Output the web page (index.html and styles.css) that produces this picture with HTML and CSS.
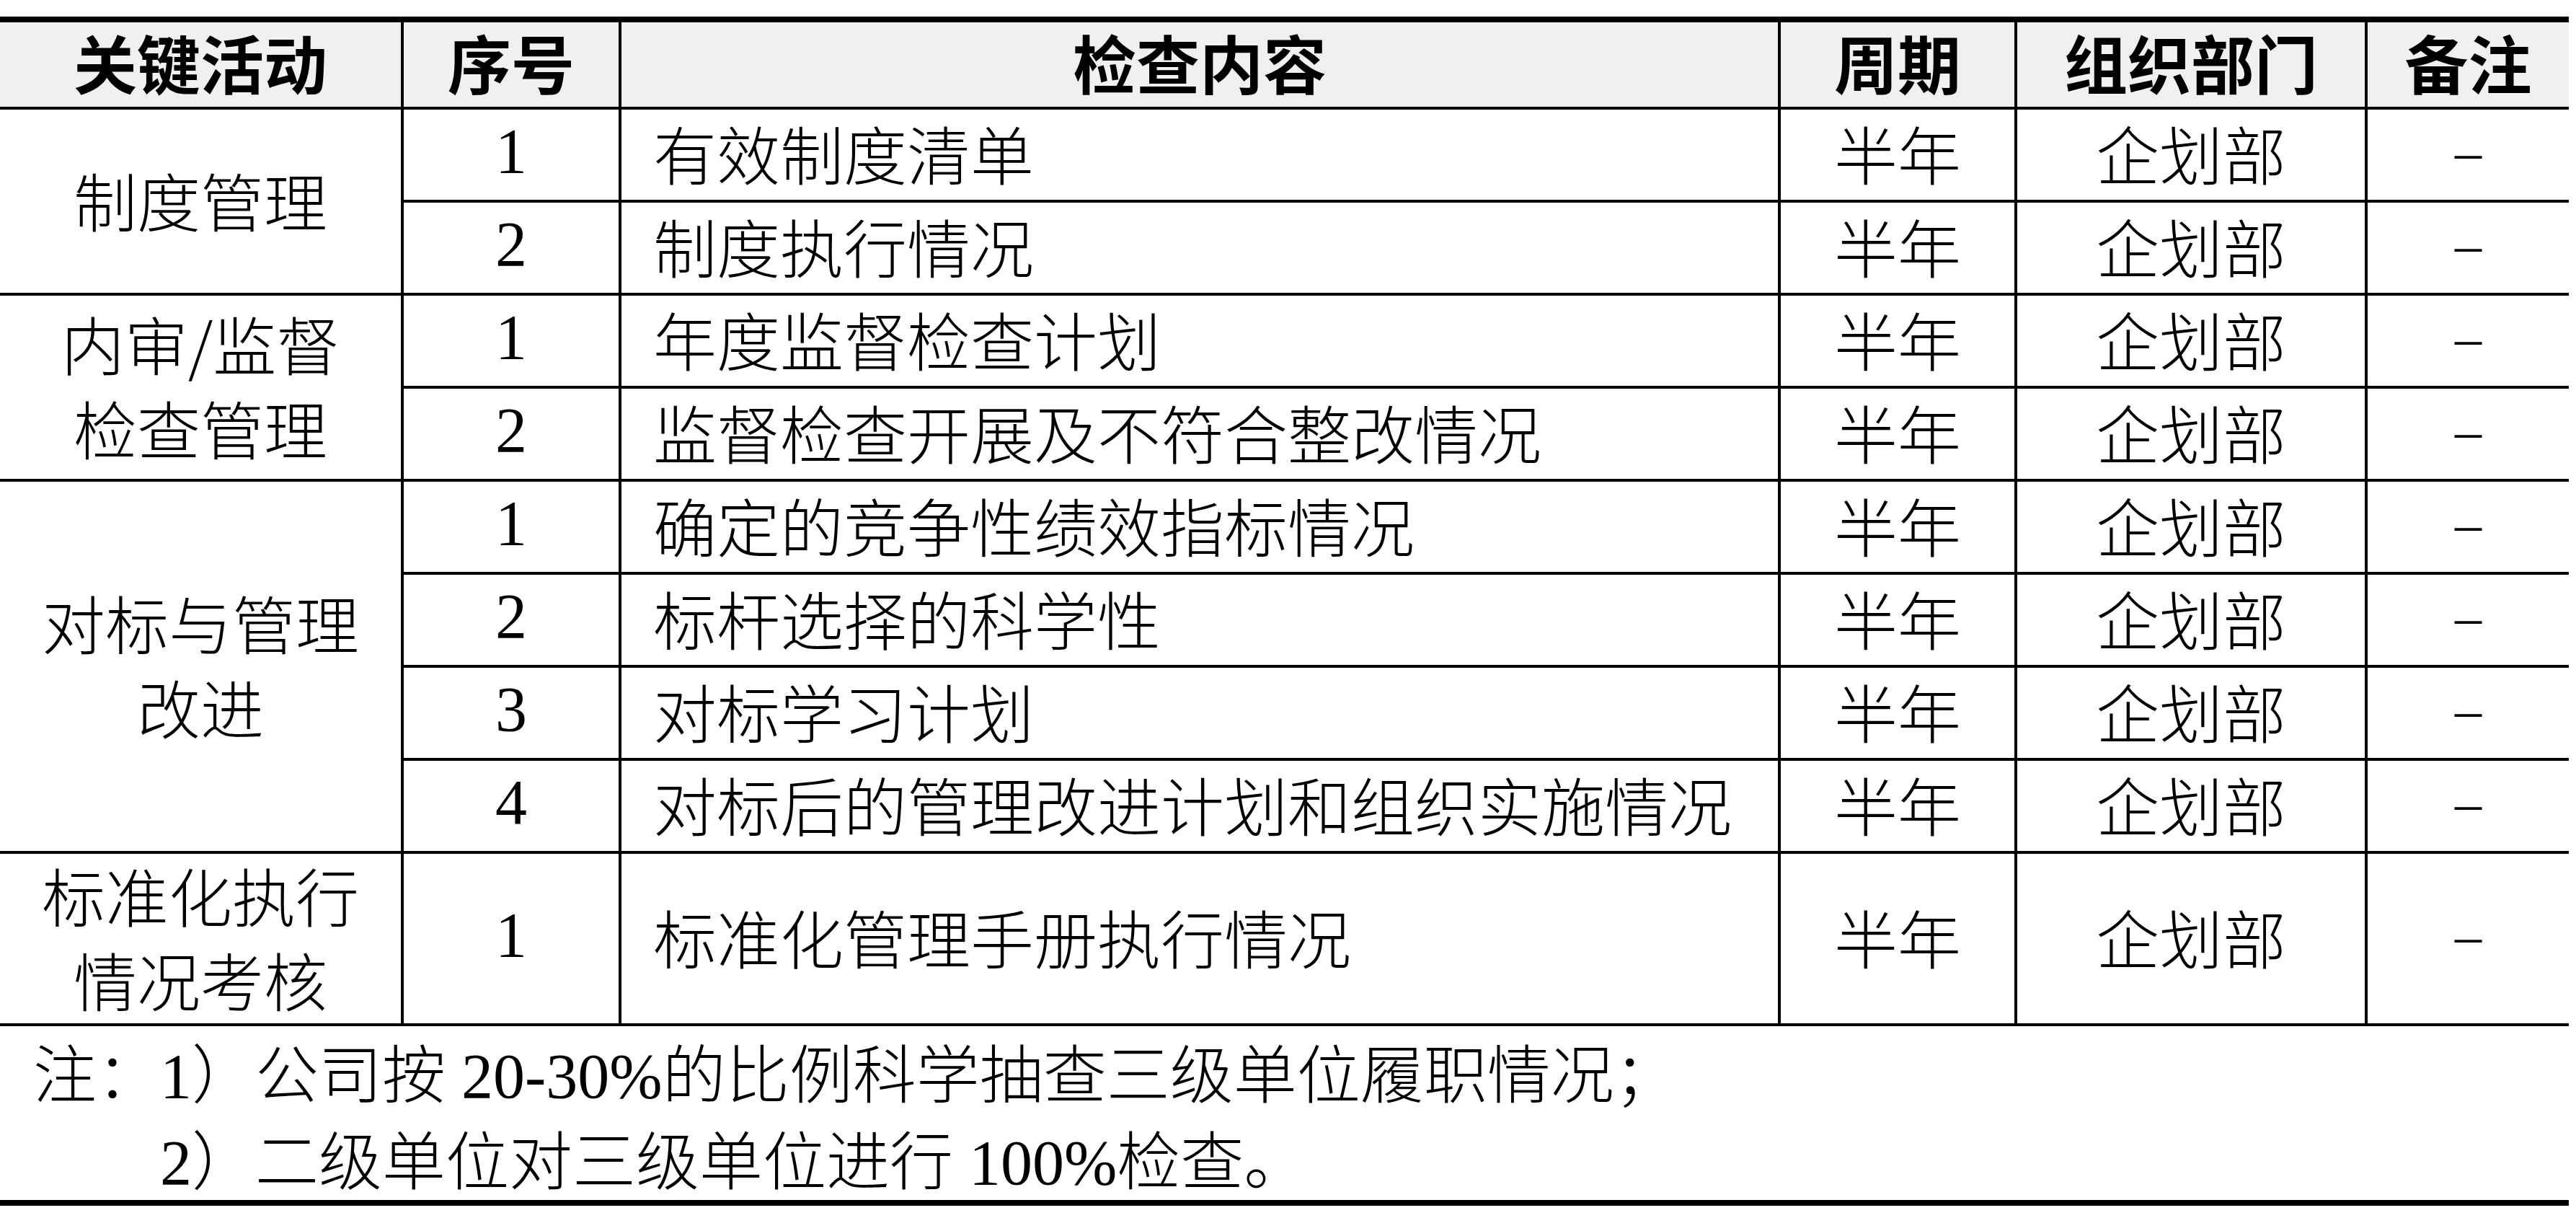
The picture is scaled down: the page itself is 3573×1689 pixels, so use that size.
FILE: index.html
```html
<!DOCTYPE html>
<html lang="zh-CN">
<head>
<meta charset="utf-8">
<title>关键活动检查表</title>
<link rel="stylesheet" href="styles.css">
</head>
<body>
<div class="sheet">
  <div class="grid">
    <div class="cell head">关键活动</div>
    <div class="cell head">序号</div>
    <div class="cell head">检查内容</div>
    <div class="cell head">周期</div>
    <div class="cell head">组织部门</div>
    <div class="cell head">备注</div>

    <div class="cell group span2">制度管理</div>
    <div class="cell"><span class="num">1</span></div>
    <div class="cell item">有效制度清单</div>
    <div class="cell">半年</div>
    <div class="cell">企划部</div>
    <div class="cell"><span class="dash">–</span></div>

    <div class="cell"><span class="num">2</span></div>
    <div class="cell item">制度执行情况</div>
    <div class="cell">半年</div>
    <div class="cell">企划部</div>
    <div class="cell"><span class="dash">–</span></div>

    <div class="cell group span2">内审/监督检查管理</div>
    <div class="cell"><span class="num">1</span></div>
    <div class="cell item">年度监督检查计划</div>
    <div class="cell">半年</div>
    <div class="cell">企划部</div>
    <div class="cell"><span class="dash">–</span></div>

    <div class="cell"><span class="num">2</span></div>
    <div class="cell item">监督检查开展及不符合整改情况</div>
    <div class="cell">半年</div>
    <div class="cell">企划部</div>
    <div class="cell"><span class="dash">–</span></div>

    <div class="cell group span4">对标与管理改进</div>
    <div class="cell"><span class="num">1</span></div>
    <div class="cell item">确定的竞争性绩效指标情况</div>
    <div class="cell">半年</div>
    <div class="cell">企划部</div>
    <div class="cell"><span class="dash">–</span></div>

    <div class="cell"><span class="num">2</span></div>
    <div class="cell item">标杆选择的科学性</div>
    <div class="cell">半年</div>
    <div class="cell">企划部</div>
    <div class="cell"><span class="dash">–</span></div>

    <div class="cell"><span class="num">3</span></div>
    <div class="cell item">对标学习计划</div>
    <div class="cell">半年</div>
    <div class="cell">企划部</div>
    <div class="cell"><span class="dash">–</span></div>

    <div class="cell"><span class="num">4</span></div>
    <div class="cell item">对标后的管理改进计划和组织实施情况</div>
    <div class="cell">半年</div>
    <div class="cell">企划部</div>
    <div class="cell"><span class="dash">–</span></div>

    <div class="cell group">标准化执行情况考核</div>
    <div class="cell"><span class="num">1</span></div>
    <div class="cell item">标准化管理手册执行情况</div>
    <div class="cell">半年</div>
    <div class="cell">企划部</div>
    <div class="cell"><span class="dash">–</span></div>
  </div>
  <div class="notes">
    <p class="note">注：<span class="num">1</span>）公司按<span class="num"> 20-30%</span>的比例科学抽查三级单位履职情况；</p>
    <p class="note sub"><span class="num">2</span>）二级单位对三级单位进行<span class="num"> 100%</span>检查。</p>
  </div>
</div>
</body>
</html>
```

FILE: styles.css
```css
html, body {
  margin: 0;
  padding: 0;
  background: #ffffff;
}

body {
  font-family: "Noto Sans CJK SC", "Noto Sans", sans-serif;
  font-weight: 300;
  font-size: 88px;
  color: #000000;
}

.sheet {
  width: 3563px;
  margin-top: 23px;
  border-top: 8px solid #000000;
  border-bottom: 8px solid #000000;
}

.grid {
  display: grid;
  grid-template-columns: 556px 298px 1604px 324px 482px 279px;
  grid-template-rows: 117px repeat(8, 125px) 235px;
  gap: 4px;
  background: #000000;
  border-bottom: 4px solid #000000;
}

.cell {
  background: #ffffff;
  display: flex;
  align-items: center;
  justify-content: center;
  text-align: center;
  line-height: 117px;
  padding: 0 0 9px 0;
  box-sizing: border-box;
  white-space: normal;
}

.head {
  background: #f0f0f0;
  font-weight: 700;
  padding-bottom: 10px;
}

.group {
  padding: 0 46px 8px 46px;
}

.span2 {
  grid-row: span 2;
}

.span4 {
  grid-row: span 4;
}

.item {
  justify-content: flex-start;
  text-align: left;
  padding-left: 44px;
}

.num {
  font-family: "Liberation Serif", "Times New Roman", serif;
  font-weight: 400;
  line-height: 1;
}

.dash {
  font-family: "Liberation Serif", "Times New Roman", serif;
  font-weight: 400;
  font-size: 74px;
  line-height: 1;
  vertical-align: 15px;
}

.notes {
  padding-top: 1px;
}

.note {
  margin: 0;
  padding-left: 46px;
  line-height: 120px;
  white-space: nowrap;
}

.note.sub {
  padding-left: 222px;
}
```
